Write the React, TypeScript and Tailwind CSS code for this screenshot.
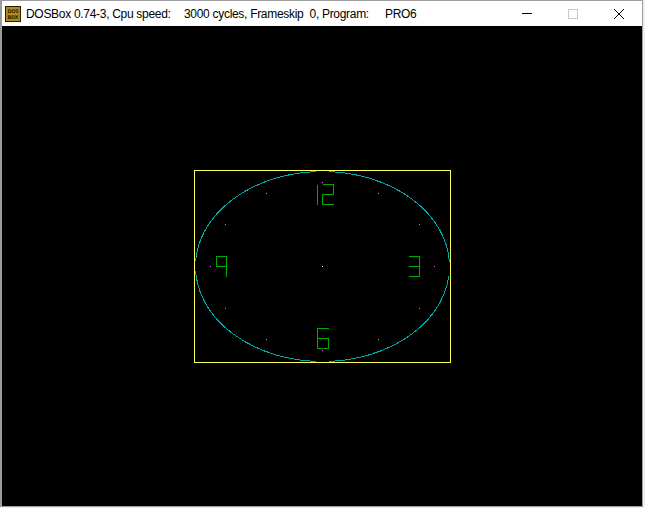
const DOTS: [number, number][] = [
  [320, 156], [264, 167], [376, 167], [223, 198], [417, 198], [208, 240],
  [432, 240], [223, 282], [417, 282], [264, 313], [376, 313], [320, 324],
]

// 7-segment style numerals, drawn on a 640x480 DOS screen
const DIGITS = [
  'M315.5 158.5 V178.5',
  'M320.5 158.5 H331.5 V168.5 H320.5 V178.5 H331.5',
  'M224.5 240.5 H214.5 V230.5 H224.5 V250.5',
  'M406.5 230.5 H417.5 V250.5 H406.5 M406.5 240.5 H417.5',
  'M326.5 302.5 H315.5 V322.5 H326.5 V312.5 H315.5',
]

function DosIcon() {
  return (
    <div className="w-4 h-4 bg-[#b08a1c] border border-[#2a1c00] flex flex-col items-center justify-center leading-none">
      <span className="font-['DejaVu_Sans',sans-serif] text-[5px] font-bold text-[#3a2600] leading-[6px]">DOS</span>
      <span className="font-['DejaVu_Sans',sans-serif] text-[5px] font-bold text-[#3a2600] leading-[6px]">BOX</span>
    </div>
  )
}

function Clock() {
  return (
    <svg width={640} height={480} viewBox="0 0 640 480" shapeRendering="crispEdges" className="block">
      <defs>
        {/* the BGI ellipse leaves small holes near its axes */}
        <mask id="ellipse-gaps">
          <rect x={0} y={0} width={640} height={480} fill="#fff" />
          <rect x={314} y={140} width={13} height={10} fill="#000" />
          <rect x={314} y={330} width={13} height={10} fill="#000" />
          <rect x={188} y={235} width={10} height={10} fill="#000" />
          <rect x={442} y={236} width={10} height={14} fill="#000" />
        </mask>
      </defs>
      <rect x={192.5} y={144.5} width={256} height={192} fill="none" stroke="#ffff55" strokeWidth={1} />
      <ellipse
        cx={320.5} cy={240.5} rx={127} ry={95}
        fill="none" stroke="#00aaaa" strokeWidth={1}
        mask="url(#ellipse-gaps)"
      />
      {DIGITS.map((d, i) => (
        <path key={i} d={d} fill="none" stroke="#00aa00" strokeWidth={1} />
      ))}
      {DOTS.map(([x, y], i) => (
        <rect key={i} x={x} y={y} width={1} height={1} fill="#ff55ff" />
      ))}
      <rect x={320} y={240} width={1} height={1} fill="#ffffff" />
    </svg>
  )
}

export default function App() {
  return (
    <div className="w-[645px] h-[508px] bg-[#f0f0f0] overflow-hidden">
      <div className="w-[643px] border-t border-r border-b border-l-2 border-[#9c9c9c] bg-white">
        {/* Title bar */}
        <div className="h-[25px] flex items-center font-['Liberation_Sans',sans-serif] text-[12px] tracking-[-0.3px] text-black">
          <div className="pl-[3px] pr-[5px]">
            <DosIcon />
          </div>
          <span className="w-[158px] shrink-0 whitespace-pre">DOSBox 0.74-3, Cpu speed:</span>
          <span className="w-[201px] shrink-0 whitespace-pre">3000 cycles, Frameskip  0, Program:</span>
          <span className="whitespace-pre">PRO6</span>
          <div className="flex-1" />
          <div className="w-[46px] h-full flex items-center justify-center">
            <div className="w-[10px] h-px bg-black" />
          </div>
          <div className="w-[46px] h-full flex items-center justify-center">
            <div className="w-[10px] h-[10px] border border-[#c8c8c8]" />
          </div>
          <div className="w-[46px] h-full flex items-center justify-center">
            <svg width={10} height={10} viewBox="0 0 10 10">
              <path d="M0 0 L10 10 M10 0 L0 10" stroke="#000" strokeWidth={1} />
            </svg>
          </div>
        </div>
        {/* DOS screen */}
        <div className="bg-black w-[640px] h-[480px]">
          <Clock />
        </div>
      </div>
    </div>
  )
}
